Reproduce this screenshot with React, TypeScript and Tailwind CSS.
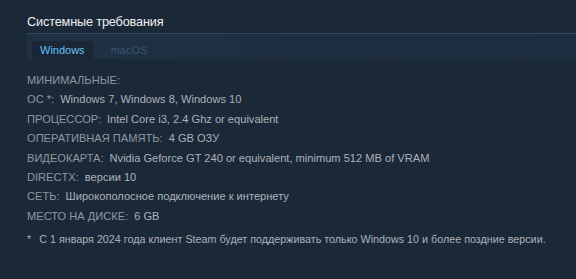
import React, { useState } from 'react';

type Req = { label: string; value: string };

const reqs: Req[] = [
  { label: 'ОС *:', value: 'Windows 7, Windows 8, Windows 10' },
  { label: 'ПРОЦЕССОР:', value: 'Intel Core i3, 2.4 Ghz or equivalent' },
  { label: 'ОПЕРАТИВНАЯ ПАМЯТЬ:', value: '4 GB ОЗУ' },
  { label: 'ВИДЕОКАРТА:', value: 'Nvidia Geforce GT 240 or equivalent, minimum 512 MB of VRAM' },
  { label: 'DIRECTX:', value: 'версии 10' },
  { label: 'СЕТЬ:', value: 'Широкополосное подключение к интернету' },
  { label: 'МЕСТО НА ДИСКЕ:', value: '6 GB' },
];

const App: React.FC = () => {
  const [tab, setTab] = useState('win');

  return (
    <div
      className="w-[576px] h-[279px] bg-[#1b2838] pl-[27px] pt-[13px] text-[11.1px] text-[#acb2b8]"
      style={{ fontFamily: '"Liberation Sans", Arial, sans-serif' }}
    >
      <h2 className="text-[12.7px] leading-[18px] tracking-[-0.15px] text-[#f0f0f0] font-normal">Системные требования</h2>
      <div className="mt-[2px] h-[26px] flex items-end pl-[5px] border-t border-[#2c4a66] bg-gradient-to-r from-[#1f3042] to-[#1d2d40]">
        <button
          onClick={() => setTab('win')}
          className={`h-[18px] px-[8px] text-[11px] leading-[18px] ${tab === 'win' ? 'bg-[#1a2636] text-[#67c1f5]' : 'text-[#3b5672]'}`}
        >
          Windows
        </button>
        <button
          onClick={() => setTab('mac')}
          className={`h-[18px] ml-[10px] px-[8px] text-[11px] leading-[18px] ${tab === 'mac' ? 'bg-[#1a2636] text-[#67c1f5]' : 'text-[#3b5672]'}`}
        >
          macOS
        </button>
      </div>
      <ul className="mt-[12px] leading-[19.4px]">
        <li className="text-[#8f98a0]">МИНИМАЛЬНЫЕ:</li>
        {reqs.map((r) => (
          <li key={r.label}>
            <span className="text-[#8f98a0]">{r.label}</span>
            <span className="ml-[6px]">{r.value}</span>
          </li>
        ))}
      </ul>
      <p className="mt-[4px] leading-[19px] text-[10.75px] whitespace-nowrap">
        <span className="mr-[8px]">*</span>С 1 января 2024 года клиент Steam будет поддерживать только Windows 10 и более поздние версии.
      </p>
    </div>
  );
};

export default App;
